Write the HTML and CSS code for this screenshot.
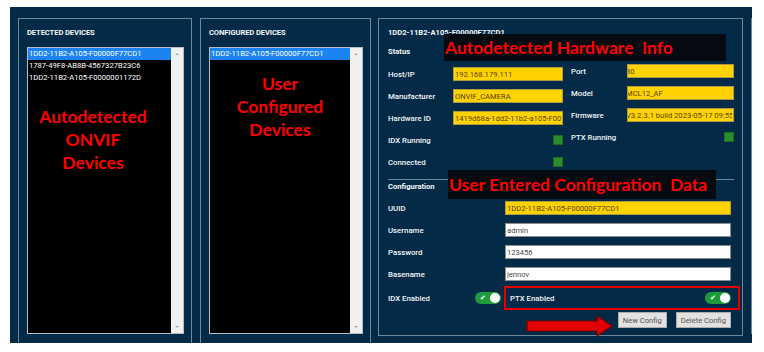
FILE: index.html
```html
<!DOCTYPE html>
<html lang="en">
<head>
    <meta charset="UTF-8">
    <meta name="viewport" content="width=device-width, initial-scale=1.0">
    <title>ONVIF Device Configuration</title>
    <link rel="stylesheet" href="styles.css">
</head>
<body>
    <div class="app">
        <!-- detected devices -->
        <section class="panel panel-list panel-detected">
            <div class="panel-title">DETECTED DEVICES</div>
            <div class="listbox">
                <ul class="list-items">
                    <li class="selected">1DD2-11B2-A105-F00000F77CD1</li>
                    <li>1787-49F8-AB8B-4567327B23C6</li>
                    <li>1DD2-11B2-A105-F0000001172D</li>
                </ul>
                <div class="scrollbar"><span class="arrow up"></span><span class="arrow down"></span></div>
            </div>
            <div class="note note-detected">Autodetected<br>ONVIF<br>Devices</div>
        </section>

        <!-- configured devices -->
        <section class="panel panel-list panel-configured">
            <div class="panel-title">CONFIGURED DEVICES</div>
            <div class="listbox">
                <ul class="list-items">
                    <li class="selected">1DD2-11B2-A105-F00000F77CD1</li>
                </ul>
                <div class="scrollbar"><span class="arrow up"></span><span class="arrow down"></span></div>
            </div>
            <div class="note note-configured">User<br>Configured<br>Devices</div>
        </section>

        <!-- device details -->
        <section class="panel panel-detail">
            <div class="device-title">1DD2-11B2-A105-F00000F77CD1</div>
            <div class="section-title">Status</div>
            <div class="status-grid">
                <div class="status-col left">
                    <div class="row"><span class="label">Host/IP</span><input class="field auto" value="192.168.179.111" readonly></div>
                    <div class="row"><span class="label">Manufacturer</span><input class="field auto" value="ONVIF_CAMERA" readonly></div>
                    <div class="row"><span class="label">Hardware ID</span><input class="field auto" value="1419d68a-1dd2-11b2-a105-F00000F77CD1" readonly></div>
                    <div class="row"><span class="label">IDX Running</span><span class="led"></span></div>
                    <div class="row"><span class="label">Connected</span><span class="led"></span></div>
                </div>
                <div class="status-col right">
                    <div class="row"><span class="label">Port</span><input class="field auto shifted" value="80" readonly></div>
                    <div class="row"><span class="label">Model</span><input class="field auto shifted" value="MCL12_AF" readonly></div>
                    <div class="row"><span class="label">Firmware</span><input class="field auto shifted" value="V3.2.3.1 build 2023-05-17 09:55" readonly></div>
                    <div class="row"><span class="label">PTX Running</span><span class="led"></span></div>
                </div>
            </div>

            <div class="divider"></div>

            <div class="section-title config-title">Configuration</div>
            <div class="config">
                <div class="row"><span class="label">UUID</span><input class="field auto wide" value="1DD2-11B2-A105-F00000F77CD1" readonly></div>
                <div class="row"><span class="label">Username</span><input class="field wide" value="admin"></div>
                <div class="row"><span class="label">Password</span><input class="field wide" value="123456"></div>
                <div class="row"><span class="label">Basename</span><input class="field wide" value="jennov"></div>
            </div>

            <div class="toggle-row">
                <div class="toggle-item">
                    <span class="label">IDX Enabled</span>
                    <span class="switch on"><span class="check">&#10004;</span><span class="knob"></span></span>
                </div>
                <div class="toggle-item highlight">
                    <span class="label">PTX Enabled</span>
                    <span class="switch on"><span class="check">&#10004;</span><span class="knob"></span></span>
                </div>
            </div>

            <div class="actions">
                <button class="btn">New Config</button>
                <button class="btn">Delete Config</button>
            </div>

            <div class="callout callout-hardware">Autodetected Hardware&nbsp; Info</div>
            <div class="callout callout-config">User Entered Configuration&nbsp; Data</div>
            <svg class="pointer" width="88" height="22" viewBox="0 0 88 22">
                <polygon points="2,6 72,6 72,1 87,11 72,21 72,16 2,16" fill="#e00000" stroke="#7a0000" stroke-width="1.2"/>
            </svg>
        </section>

        <section class="panel panel-extra">
            <div class="extra-divider"></div>
        </section>
    </div>
</body>
</html>
```

FILE: styles.css
```css
body {
    margin: 0;
    background: #ffffff;
    font-family: Roboto, "Liberation Sans", sans-serif;
    color: #f2f5f7;
}
.app {
    display: flex;
    gap: 8px;
    margin: 7px 0 0 10px;
    width: 742px;
    height: 336px;
    padding: 11px 0 0 8px;
    box-sizing: border-box;
    background: #032a46;
    overflow: hidden;
}
.panel {
    position: relative;
    flex: none;
    border: 1px solid #70869a;
    box-sizing: border-box;
}
.panel-list {
    height: 327px;
    padding: 9px 7px 0 8px;
}
.panel-detected { width: 174px; }
.panel-configured { width: 171px; margin-right: -1px; }
.panel-title {
    font-size: 7.6px;
    font-weight: bold;
    line-height: 10px;
    height: 10px;
    margin-bottom: 9px;
    letter-spacing: -0.1px;
}
.listbox {
    display: flex;
    height: 287px;
    border: 1px solid #b8bcc0;
    background: #000000;
    box-sizing: border-box;
}
.list-items {
    flex: 1;
    list-style: none;
    margin: 0;
    padding: 0;
}
.list-items li {
    height: 12px;
    line-height: 12px;
    font-size: 7.6px;
    color: #ffffff;
    padding-left: 1px;
    white-space: nowrap;
}
.list-items li.selected {
    background: #1b84f0;
}
.scrollbar {
    position: relative;
    width: 12px;
    background: #f0f0f0;
}
.arrow {
    position: absolute;
    left: 4px;
    width: 0;
    height: 0;
    border-left: 2px solid transparent;
    border-right: 2px solid transparent;
}
.arrow.up { top: 5px; border-bottom: 2px solid #a8a8a8; }
.arrow.down { bottom: 5px; border-top: 2px solid #a8a8a8; }
.note {
    position: absolute;
    font-family: Lato, "Open Sans", sans-serif;
    font-weight: bold;
    font-size: 17.5px;
    line-height: 23px;
    color: #ff0000;
    text-align: center;
}
.note-detected { left: 0; top: 86px; width: 148px; }
.note-configured { left: 0; top: 53px; width: 158px; }

.panel-detail {
    width: 365px;
    height: 318px;
    padding: 9px 8px 0 9px;
}
.device-title {
    font-size: 7.6px;
    font-weight: bold;
    line-height: 10px;
    height: 10px;
}
.section-title {
    font-size: 7.6px;
    font-weight: bold;
    line-height: 10px;
    height: 10px;
    margin-top: 9px;
}
.status-grid {
    display: flex;
    gap: 8px;
}
.status-col.left { width: 175px; padding-top: 6px; }
.status-col.right { width: 163px; padding-top: 3px; }
.row {
    display: flex;
    align-items: center;
    justify-content: space-between;
    height: 22px;
}
.label {
    font-size: 7.8px;
    font-weight: 500;
    white-space: nowrap;
}
.field {
    box-sizing: border-box;
    height: 14px;
    padding: 0 1px;
    margin: 0;
    border: 1px solid #8c8c8c;
    background: #ffffff;
    color: #4a4a4a;
    font-family: Roboto, "Liberation Sans", sans-serif;
    font-size: 7.6px;
    outline: none;
}
.status-col.left .field { width: 110px; }
.status-col.right .field { width: 107px; }
.field.auto {
    background: #ffd200;
    border-color: #b09a40;
    color: #5a4500;
}
.field.shifted { text-indent: -2px; padding-left: 0; }
.field.wide { width: 226px; }
.led {
    width: 10px;
    height: 10px;
    box-sizing: border-box;
    background: #2a8c2a;
    border: 1px solid #1d6b1d;
}
.divider {
    height: 1px;
    background: #70869a;
    margin-top: 6px;
}
.config-title { margin-top: 2px; }
.config { margin-top: 5px; }
.config .row { padding-right: 3px; }

.toggle-row {
    display: flex;
    align-items: center;
    margin-top: 1px;
    margin-right: -6px;
}
.toggle-item {
    display: flex;
    align-items: center;
    justify-content: space-between;
}
.toggle-item:first-child {
    width: 113px;
    margin-right: 3px;
}
.toggle-item.highlight {
    flex: 1;
    height: 24px;
    box-sizing: border-box;
    border: 2px solid #e80000;
    padding: 0 7px 0 4px;
}
.switch {
    position: relative;
    width: 26px;
    height: 12px;
    border-radius: 6px;
    background: #1e9c3c;
}
.switch .check {
    position: absolute;
    left: 5px;
    top: 0;
    font-size: 7px;
    line-height: 12px;
    color: #ffffff;
}
.switch .knob {
    position: absolute;
    right: 1px;
    top: 1px;
    width: 10px;
    height: 10px;
    border-radius: 50%;
    background: #ffffff;
}
.actions {
    display: flex;
    justify-content: flex-end;
    gap: 9px;
    margin-top: 2px;
    padding-right: 3px;
}
.btn {
    height: 16px;
    padding: 0 4px;
    border: 1px solid #adadad;
    background: #e1e1e1;
    color: #555555;
    font-family: Roboto, "Liberation Sans", sans-serif;
    font-size: 7.6px;
}
.callout {
    position: absolute;
    display: flex;
    align-items: center;
    padding-left: 1px;
    background: #050b10;
    color: #ff0000;
    font-family: Lato, "Open Sans", sans-serif;
    font-weight: bold;
    font-size: 17.5px;
    white-space: nowrap;
}
.callout-hardware { left: 65px; top: 15px; width: 282px; height: 27px; box-sizing: border-box; }
.callout-config { left: 69px; top: 151px; width: 268px; height: 29px; box-sizing: border-box; }
.pointer {
    position: absolute;
    left: 146px;
    top: 296px;
}
.panel-extra {
    width: 20px;
    height: 316px;
    padding-top: 161px;
}
.extra-divider {
    height: 1px;
    background: #70869a;
}
```
